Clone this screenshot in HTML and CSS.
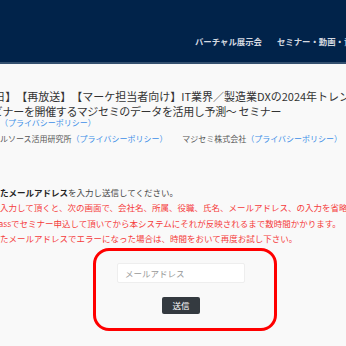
FILE: index.html
```html
<!DOCTYPE html>
<html lang="ja">
  <head>
    <meta charset="UTF-8" />
    <meta name="viewport" content="width=device-width, initial-scale=1.0" />
    <title>セミナー申込</title>
    <link rel="stylesheet" href="styles.css">
  </head>
  <body>
    <header class="site-header">
      <nav class="gnav">
        <a href="#">バーチャル展示会</a>
        <a href="#">セミナー・動画・資料</a>
      </nav>
    </header>

    <main class="page">
      <h1 class="seminar-title">
        <span class="line">【2月1日】【再放送】【マーケ担当者向け】IT業界／製造業DXの2024年トレンド</span>
        <span class="line line-sub">～ウェビナーを開催するマジセミのデータを活用し予測～ セミナー</span>
      </h1>
      <p class="org">株式会社Ｘ<a href="#">（プライバシーポリシー）</a></p>
      <p class="org org-list">
        協力：ツールソース活用研究所<a href="#">（プライバシーポリシー）</a>
        <span class="org-item">マジセミ株式会社<a href="#">（プライバシーポリシー）</a></span>
      </p>

      <div class="notes">
        <p class="lead"><b>ご登録されたメールアドレス</b>を入力し送信してください。</p>
        <p class="warn">アドレスを入力して頂くと、次の画面で、会社名、所属、役職、氏名、メールアドレス、の入力を省略できます。</p>
        <p class="warn">マジセミ Passでセミナー申込して頂いてから本システムにそれが反映されるまで数時間かかります。</p>
        <p class="warn">※入力されたメールアドレスでエラーになった場合は、時間をおいて再度お試し下さい。</p>
      </div>

      <form class="mail-form">
        <input type="email" class="mail-input" placeholder="メールアドレス" />
        <button type="submit" class="send-btn">送信</button>
      </form>
    </main>
  </body>
</html>
```

FILE: styles.css
```css
* {
  margin: 0;
  padding: 0;
  box-sizing: border-box;
}

body {
  font-family: "Noto Sans CJK JP", "Noto Sans", sans-serif;
  background-color: #f9f9f9;
  color: #333;
  overflow: hidden;
  text-spacing-trim: space-all;
}

a {
  text-decoration: none;
}

.site-header {
  background-color: #01234a;
  height: 64px;
  border-bottom: 2px solid #34506f;
  display: flex;
  align-items: center;
  padding: 20px 0 0 195px;
}

.gnav {
  display: flex;
  gap: 15px;
  white-space: nowrap;
}

.gnav a {
  color: #d4d9e0;
  font-size: 8.4px;
  font-weight: bold;
}

.page {
  margin-left: -40px;
  padding-top: 25px;
}

.seminar-title {
  font-size: 11px;
  font-weight: normal;
  line-height: 15px;
  color: #333;
}

.seminar-title .line {
  display: block;
  white-space: nowrap;
}

.seminar-title .line-sub {
  letter-spacing: -0.35px;
}

.org {
  font-size: 8px;
  line-height: 8px;
  color: #555;
  white-space: nowrap;
}

.org a {
  color: #3d8fe8;
}

.org-list {
  margin-top: 8px;
}

.org-item {
  margin-left: 13px;
}

.notes {
  margin: 41.5px 0 0 -2.5px;
  font-size: 8.5px;
  line-height: 15.5px;
  white-space: nowrap;
}

.lead {
  color: #444;
}

.lead b {
  color: #222;
}

.warn {
  color: #f53b3b;
}

.mail-form {
  margin: 1px 0 0 133px;
  width: 184px;
  height: 83px;
  border: 3px solid #ff0000;
  border-radius: 16px;
  padding: 12px 29px 13px 21px;
  display: flex;
  flex-direction: column;
  align-items: center;
  gap: 14px;
}

.mail-input {
  width: 128px;
  height: 20px;
  border: 1px solid #eeeeee;
  border-radius: 2px;
  background: #fff;
  padding: 0 7px;
  font-family: inherit;
  font-size: 8.5px;
  outline: none;
}

.mail-input::placeholder {
  color: #999;
}

.send-btn {
  width: 38px;
  height: 17px;
  border: none;
  border-radius: 2px;
  background-color: #343a40;
  color: #fff;
  font-family: inherit;
  font-size: 8.5px;
  cursor: pointer;
}
```
